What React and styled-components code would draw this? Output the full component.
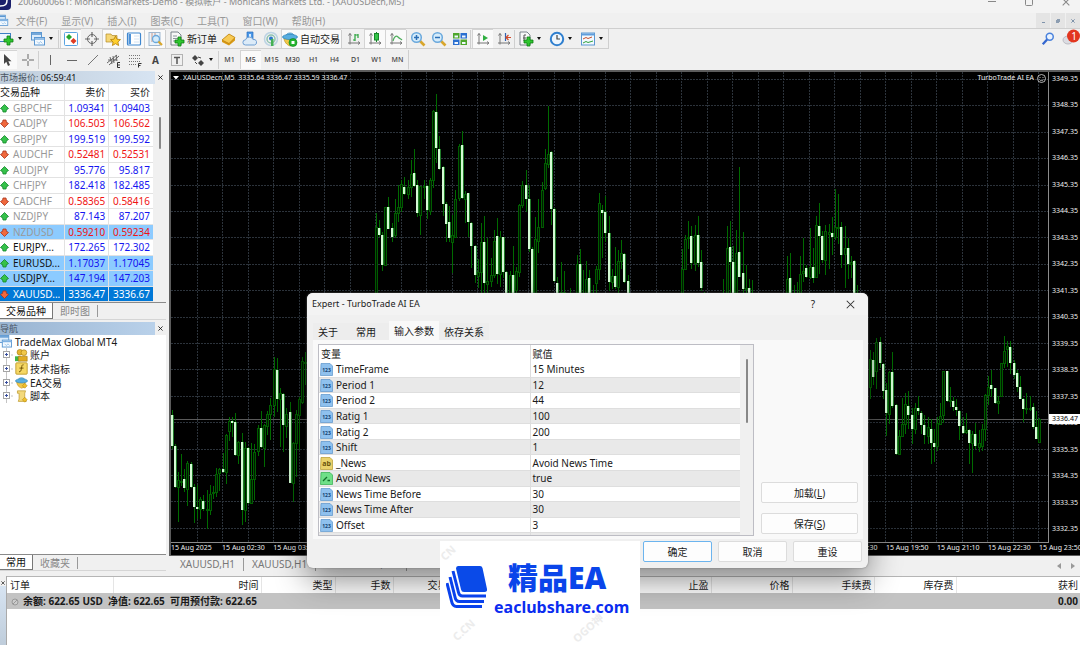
import styled, { createGlobalStyle, css } from 'styled-components'

const Global = createGlobalStyle`
  * { box-sizing: border-box; }
  body {
    margin: 0;
    overflow: hidden;
    background: #f0f0f0;
    color: #1a1a1a;
    font-family: 'Noto Sans', 'Noto Sans CJK SC', sans-serif;
    font-size: 10px;
    line-height: 14px;
  }
  button {
    font: inherit;
    color: inherit;
    padding: 0;
    border: 0;
    background: none;
    white-space: nowrap;
  }
  table { border-collapse: collapse; }
  th { font-weight: 400; }
`

const Desktop = styled.div`
  position: relative;
  display: flex;
  flex-direction: column;
  height: 100vh;
  min-height: 600px;
  overflow: hidden;
`

/* window chrome */

const TitleBar = styled.header`
  display: flex;
  align-items: center;
  flex: none;
  height: 22px;
  margin-top: -9px;
  background: #f3f3f3;
  color: #8c8c8c;
  font-size: 9px;
`

const Caption = styled.span`
  flex: 1;
  padding-left: 7px;
  white-space: nowrap;
`

const WindowButtons = styled.div`
  display: flex;
  gap: 21px;
  padding-right: 6px;
  color: #777;

  button {
    display: flex;
    width: 16px;
    justify-content: center;
  }
`

const MenuBar = styled.nav`
  display: flex;
  align-items: center;
  flex: none;
  height: 15px;
  gap: 14px;
  color: #999;

  > svg { margin-right: -7px; }
  button { height: 15px; }
`

const ChildButtons = styled.div`
  display: flex;
  margin-left: auto;
  gap: 1px;

  button {
    display: flex;
    align-items: center;
    justify-content: center;
    width: 14px;
    background: #e4e4e4;
  }
`

/* toolbars */

const ToolBar = styled.div`
  display: flex;
  align-items: center;
  flex: none;
  height: 21px;
  border-top: 1px solid ${p => (p.$edge ? '#cfcfcf' : 'transparent')};
`

const ToolGroup = styled.div`
  display: flex;
  align-items: center;
  height: 20px;
  margin-left: -4px;
  border-right: 1px solid #cfcfcf;
  border-bottom: 1px solid ${p => (p.$edge ? '#cfcfcf' : 'transparent')};
`

const Tool = styled.button`
  display: flex;
  align-items: center;
  justify-content: center;
  gap: 2px;
  height: 19px;
  ${p => (p.$wide ? 'padding: 0 1px;' : 'width: 21px;')}
  ${p => p.$on && css`
    background: #fafafa;
    box-shadow: inset 1px 1px 0 #d4d4d4;
  `}
`

const Letter = styled(Tool)`
  color: #444;
  font-weight: 700;
`

const Period = styled(Tool)`
  color: #444;
  font-size: 7px;
  font-weight: 500;
`

const Caret = styled.button`
  width: 8px;
  height: 19px;
  margin-right: 2px;

  &::after {
    content: '';
    display: block;
    width: 0;
    margin-left: 1px;
    border: 2px solid transparent;
    border-top: 3px solid #111;
    border-bottom: 0;
  }
`

const Divider = styled.i`
  width: 1px;
  height: 18px;
  margin-right: ${p => p.$space || 0}px;
  background: #cfcfcf;
`

const ToolRight = styled.div`
  display: flex;
  gap: 4px;
  margin-left: auto;
`

/* side panels */

const Workspace = styled.main`
  display: flex;
  flex: 1;
  min-height: 0;
`

const Side = styled.aside`
  display: flex;
  flex-direction: column;
  flex: none;
  width: 166px;
  padding-top: 1px;
`

const PanelHead = styled.div`
  display: flex;
  flex: none;
  height: 13px;
  font-size: 9px;
  line-height: 13px;

  h2 {
    flex: 1;
    margin: 0;
    font-size: 9px;
    font-weight: 400;
    color: #4a5563;
    background: ${p => (p.$active ? 'linear-gradient(90deg, #99b4d1, #b9d1ea)' : 'linear-gradient(90deg, #bfcddb, #d7e4f2)')};
  }
  b { font-weight: 400; color: #111; }
  button {
    display: flex;
    align-items: center;
    justify-content: center;
    width: 11px;
  }
`

const ListBox = styled.div`
  display: flex;
  flex: none;
  border-bottom: 1px solid #8a8a8a;
`

const Quotes = styled.table`
  flex: 1;
  height: 218px;
  table-layout: fixed;
  background: #fff;

  th, td {
    padding: 0 3px 0 0;
    line-height: 14px;
    text-align: right;
    white-space: nowrap;
    border-bottom: 1px solid #e2e2e2;
    border-right: 1px solid #e2e2e2;
  }
  th { height: 16px; }
  th:first-child { width: 64px; }
  td:last-child, th:last-child { border-right: 0; }
  th:first-child, td:first-child { text-align: left; }
`

const Quote = styled.tr`
  color: ${p => (p.$dir === 'up' ? '#1414f0' : '#f01414')};
  ${p => p.$mark && 'background: #8ccbff;'}
  ${p => p.$selected && 'background: #0078d7; color: #fff;'}

  td:first-child {
    color: ${p => (p.$selected ? '#fff' : p.$dim ? '#999' : '#111')};
  }
  td svg {
    margin-right: 4px;
    vertical-align: -1px;
  }
`

const Gutter = styled.div`
  display: flex;
  justify-content: center;
  width: ${p => p.$width}px;
  padding-top: ${p => p.$top}px;
  background: #f0f0f0;
`

const Thumb = styled.i`
  width: 2px;
  height: ${p => p.$length}px;
  border-radius: 1px;
  background: #888;
`

const BottomTabs = styled.div`
  display: flex;
  flex: none;
  height: 16px;
  ${p => p.$line && 'border-top: 1px solid #8a8a8a;'}
`

const BottomTab = styled.button`
  padding: 0 7px;
  color: #888;
  ${p => p.$on && css`
    padding: 0 6px;
    color: #111;
    background: #fff;
    border-right: 1px solid #777;
    border-bottom: 1px solid #777;
  `}
`

const Tick = styled.i`
  width: 1px;
  height: 12px;
  margin-top: 2px;
  background: #999;
`

const NavGap = styled.div`
  flex: none;
  height: 3px;
  border-top: 1px solid #d5d5d5;
`

const TreeArea = styled.div`
  flex: 1;
  background: #fff;
`

const Tree = styled.ul`
  display: grid;
  grid-template-rows: repeat(5, minmax(0, 1fr));
  height: 68px;
  margin: 0;
  padding: 0;
  list-style: none;
`

const Node = styled.li`
  display: flex;
  align-items: center;
  gap: ${p => (p.$root ? 3 : 2)}px;
  padding-left: ${p => (p.$root ? 0 : 2)}px;
`

/* chart */

const ChartPane = styled.section`
  display: flex;
  flex-direction: column;
  flex: 1;
  min-width: 0;
  margin-left: 3px;
`

const ChartFrame = styled.div`
  position: relative;
  display: flex;
  flex-direction: column;
  flex: 1;
  min-height: 0;
  border: solid #5c5c5c;
  border-width: 2px 0 1px 2px;
  background: #000;
  color: #eee;
  font-size: 7px;
  line-height: 10px;
  overflow: hidden;
`

const PlotRow = styled.div`
  display: flex;
  flex: 1;
  min-height: 0;
`

const Plot = styled.div`
  flex: 1;
  min-width: 0;
  border-right: 1px solid #8c8c8c;
  border-bottom: 1px solid #8c8c8c;
  overflow: hidden;

  svg {
    display: block;
    width: 100%;
    height: 100%;
  }
`

const PriceAxis = styled.div`
  position: relative;
  display: flex;
  flex-direction: column;
  justify-content: space-between;
  width: 31px;
  padding: 2px 0 9px 3px;
`

const PriceTag = styled.div`
  position: absolute;
  top: 342px;
  left: 0;
  right: 0;
  padding-left: 3px;
  background: #fff;
  color: #000;
`

const TimeAxis = styled.div`
  display: flex;
  flex: none;
  height: 12px;
  padding-right: 41px;
  white-space: nowrap;

  span { flex: 1 1 0; min-width: 0; }
  span:last-child { flex: 0 0 0; }
`

const ChartTitle = styled.div`
  position: absolute;
  top: 1px;
  left: 2px;
  display: flex;
  align-items: center;
  gap: 4px;
  white-space: pre;
`

const ExpertLabel = styled(ChartTitle)`
  left: auto;
  right: 34px;
  gap: 3px;
`

const ChartTabs = styled.div`
  display: flex;
  align-items: center;
  flex: none;
  height: 17px;
  padding-left: 3px;
  color: #777;

  button {
    height: 13px;
    padding: 0 8px;
    border-right: 1px solid #999;
    line-height: 13px;
  }
  div { margin-left: auto; }
  div button { border: 0; padding: 0 5px; }
`

/* terminal */

const Terminal = styled.section`
  display: flex;
  flex: none;
  height: 72px;
  padding-top: 3px;
`

const Rail = styled.div`
  display: flex;
  flex-direction: column;
  width: 7px;
  border-right: 1px solid #aaa;

  button { height: 10px; line-height: 10px; }
  i {
    flex: 1;
    background: linear-gradient(#d7e4f2, #bfcddb);
  }
`

const TradesArea = styled.div`
  flex: 1;
  border-top: 1px solid #b5b5b5;
  background: #fff;
`

const Trades = styled.table`
  width: 100%;
  table-layout: fixed;

  th, td {
    height: 16px;
    padding: 0 2px;
    text-align: right;
    white-space: nowrap;
    line-height: 14px;
  }
  th + th { border-left: 1px solid #e5e5e5; }
  th:first-child, td:first-child { text-align: left; padding-left: 3px; }
  td {
    background: #c3c3c3;
    font-weight: 700;
  }
  td svg { margin: 0 4px 0 1px; vertical-align: -1px; }
`

/* expert dialog */

const Dialog = styled.div`
  position: absolute;
  top: 293px;
  left: 307px;
  width: 561px;
  border-radius: 6px;
  background: #f0f0f0;
  box-shadow: 0 0 2px #777, 0 12px 32px rgba(0, 0, 0, 0.45);
`

const DialogTitle = styled.div`
  display: flex;
  align-items: center;
  height: 22px;
  padding: 0 13px 0 5px;
  border-radius: 6px 6px 0 0;
  background: #f3f3f3;

  h1 {
    flex: 1;
    margin: 0;
    font-size: 9px;
    font-weight: 400;
  }
  button {
    display: flex;
    justify-content: center;
    width: 10px;
    margin-left: 27px;
  }
`

const DialogTabs = styled.div`
  display: flex;
  align-items: flex-end;
  height: 25px;
  padding-left: 6px;
`

const DialogTab = styled.button`
  min-width: 38px;
  height: ${p => (p.$on ? 19 : 17)}px;
  padding: 0 5px;
  text-align: left;
  background: ${p => (p.$on ? '#f9f9f9' : '#ededed')};
`

const DialogPage = styled.div`
  display: flex;
  gap: 7px;
  height: 199px;
  margin: 0 5px 0 6px;
  padding: 4px 5px 3px;
  background: #f9f9f9;
`

const ParamBox = styled.div`
  display: flex;
  flex: 1;
  align-items: flex-start;
  border: 1px solid #bdbdc4;
  overflow: hidden;
  background: #fff;

  ${Gutter} { height: 100%; }
`

const Params = styled.table`
  flex: 1;
  height: 204px;
  table-layout: fixed;

  th, td {
    padding: 0 2px;
    line-height: 14px;
    text-align: left;
    white-space: nowrap;
  }
  th { height: 17px; padding-top: 1px; }
  th:first-child { width: 211px; }
  th + th, td + td { border-left: 1px solid #ddd; }
  td { border-bottom: 1px solid #dedede; }
  tbody tr:nth-child(even) { background: #e9e9e9; }
  td:first-child { padding-left: 1px; }
  td svg {
    display: inline-block;
    margin-right: 3px;
    vertical-align: -3px;
  }
`

const PageActions = styled.div`
  display: flex;
  flex-direction: column;
  justify-content: flex-end;
  gap: 10px;
  width: 97px;
  padding-bottom: 2px;
`

const PushButton = styled.button`
  height: 21px;
  border: 1px solid ${p => (p.$primary ? '#6cb4ee' : '#dcdcdc')};
  border-radius: 2px;
  background: #fdfdfd;
`

const DialogFoot = styled.div`
  display: flex;
  justify-content: flex-end;
  gap: 6px;
  height: 29px;
  padding: 2px 6px 6px;

  ${PushButton} { width: 69px; }
`

/* site badge */

const Badge = styled.div`
  position: absolute;
  left: 440px;
  bottom: 0;
  isolation: isolate;
  display: flex;
  gap: 6px;
  width: 200px;
  height: 104px;
  padding: 20px 0 0 6px;
  background: #fff;
  color: #0a45ea;
  font-weight: 700;
  white-space: nowrap;
  overflow: hidden;

  > svg { flex: none; margin-top: 4px; }
  strong {
    display: block;
    padding-left: 14px;
    font-size: 30px;
    line-height: 34px;
  }
  a {
    display: block;
    font-size: 16px;
    line-height: 24px;
    color: #0a2cf0;
    text-decoration: none;
  }
`

const Ghost = styled.span`
  position: absolute;
  z-index: -1;
  left: ${p => p.$x}px;
  top: ${p => p.$y}px;
  color: #ececec;
  font-size: 11px;
  transform: rotate(-42deg);
`

/* bars: [high, low, body top, body bottom, falling], three units per pixel */

const runs = [
  { start: -64, base: 690, bars: [
    [330, 447, 345, 437, 1], [432, 565, 437, 562, 1], [515, 665, 541, 560, 0], [462, 558, 543, 545, 0],
    [508, 575, 537, 565, 1], [482, 618, 488, 567, 0], [485, 563, 492, 560, 1], [553, 670, 562, 620, 1],
    [555, 657, 620, 628, 1], [590, 657, 598, 628, 0], [585, 632, 602, 628, 1], [570, 687, 628, 630, 0],
    [555, 645, 581, 630, 0], [557, 597, 577, 580, 0], [505, 592, 521, 577, 0], [505, 573, 508, 520, 0],
    [460, 520, 508, 516, 1], [402, 553, 405, 515, 0], [350, 422, 362, 392, 0], [352, 412, 362, 368, 1],
    [340, 468, 366, 465, 1], [423, 492, 425, 465, 0], [400, 675, 427, 630, 1], [425, 665, 443, 630, 0],
    [440, 613, 443, 610, 1], [428, 612, 538, 608, 0], [432, 600, 455, 537, 0], [375, 467, 383, 453, 0],
    [333, 445, 383, 441, 1], [372, 500, 376, 443, 0], [333, 405, 343, 377, 0], [295, 420, 315, 343, 0],
    [170, 352, 207, 315, 0], [175, 335, 210, 297, 1], [263, 440, 278, 297, 0], [280, 455, 282, 376, 1],
    [325, 415, 342, 377, 0], [305, 550, 337, 548, 1], [425, 607, 428, 548, 0], [330, 530, 343, 428, 0],
    [292, 450, 298, 345, 0], [170, 312, 182, 305, 0], [155, 255, 187, 189, 0]
  ] },
  { start: 0, base: 0, bars: [
    [430, 690, 472, 690, 0], [450, 500, 474, 495, 1], [487, 602, 496, 584, 1], [410, 586, 410, 586, 0],
    [380, 478, 411, 476, 1], [458, 515, 475, 502, 1], [388, 503, 428, 494, 0], [346, 455, 411, 428, 0],
    [330, 425, 343, 410, 0], [321, 375, 351, 373, 1], [330, 387, 351, 371, 0], [270, 380, 312, 351, 0],
    [236, 350, 310, 347, 1], [330, 442, 344, 430, 1], [347, 495, 349, 436, 0], [330, 388, 349, 350, 0],
    [345, 447, 349, 420, 1], [325, 435, 331, 423, 0], [120, 355, 122, 330, 0], [72, 278, 125, 234, 1],
    [197, 300, 236, 297, 1], [288, 437, 291, 402, 1], [395, 515, 401, 461, 1], [407, 515, 455, 504, 1],
    [435, 610, 495, 515, 0], [360, 503, 387, 502, 0], [223, 393, 228, 385, 0], [183, 388, 226, 384, 1],
    [362, 460, 372, 386, 0], [368, 500, 370, 455, 1], [457, 595, 459, 527, 1], [525, 640, 527, 614, 1],
    [566, 655, 607, 617, 0], [460, 690, 516, 607, 0], [437, 690, 515, 640, 1], [505, 690, 632, 643, 0],
    [565, 650, 615, 632, 0], [480, 625, 512, 615, 0], [445, 643, 497, 612, 1], [483, 650, 501, 613, 0],
    [500, 625, 502, 606, 1], [603, 690, 606, 690, 1], [603, 690, 615, 690, 0], [528, 690, 615, 690, 1],
    [592, 690, 603, 660, 0], [403, 620, 405, 607, 0], [333, 415, 345, 405, 0], [300, 425, 345, 387, 1],
    [345, 545, 386, 538, 1], [530, 690, 538, 690, 1], [440, 690, 508, 690, 0], [387, 550, 472, 513, 0],
    [335, 475, 361, 470, 0], [238, 360, 280, 355, 0], [107, 293, 253, 283, 0], [243, 465, 246, 418, 1],
    [415, 635, 418, 633, 1], [620, 690, 640, 690, 1], [575, 690, 665, 690, 0], [603, 690, 665, 690, 0]
  ] },
  { start: 61, base: 0, bars: [
    [655, 690, 680, 690, 0], [680, 700, 685, 690, 0], [555, 690, 583, 690, 0], [537, 690, 583, 690, 1],
    [600, 690, 670, 690, 0], [573, 690, 628, 690, 0], [600, 690, 625, 690, 1], [645, 690, 670, 690, 0],
    [587, 690, 597, 640, 0], [370, 630, 400, 598, 0], [405, 563, 420, 430, 1], [378, 515, 427, 489, 1],
    [438, 662, 490, 636, 1], [597, 658, 618, 637, 0], [530, 658, 618, 650, 1], [540, 690, 573, 650, 0],
    [510, 598, 550, 573, 0], [550, 640, 553, 636, 1], [615, 690, 634, 690, 1]
  ] },
  { start: 96, base: 0, bars: [
    [537, 690, 597, 690, 0], [494, 600, 507, 598, 0], [452, 537, 500, 505, 0], [467, 597, 498, 578, 1],
    [465, 603, 495, 578, 0], [437, 590, 495, 580, 1], [540, 662, 577, 653, 1], [665, 690, 670, 690, 0]
  ] },
  { start: 109, base: 0, bars: [
    [628, 690, 680, 690, 0], [467, 690, 535, 690, 0], [452, 690, 532, 577, 1], [528, 690, 577, 690, 1],
    [480, 690, 548, 690, 0], [290, 622, 547, 620, 1], [487, 690, 608, 657, 1], [586, 690, 655, 658, 0],
    [628, 690, 653, 690, 1], [630, 690, 670, 690, 0]
  ] },
  { start: 129, base: 0, bars: [
    [558, 690, 627, 690, 0], [548, 690, 625, 690, 1], [645, 690, 680, 690, 0], [637, 690, 680, 690, 0],
    [558, 690, 613, 690, 0], [503, 635, 603, 608, 0], [585, 625, 595, 620, 1], [475, 628, 592, 620, 0],
    [533, 640, 590, 624, 1], [437, 623, 465, 620, 0], [400, 612, 467, 498, 1], [483, 580, 498, 570, 1],
    [465, 615, 482, 570, 0], [462, 597, 487, 492, 0], [440, 555, 488, 500, 1], [357, 510, 472, 500, 0],
    [372, 522, 470, 473, 0], [457, 595, 470, 555, 1], [467, 655, 535, 553, 0], [503, 628, 535, 583, 1],
    [558, 623, 577, 581, 0], [570, 690, 573, 690, 1], [645, 690, 680, 690, 0]
  ] },
  { start: 155, base: 690, bars: [
    [150, 298, 178, 262, 0], [155, 255, 181, 232, 1], [115, 267, 127, 212, 0], [112, 205, 127, 190, 1],
    [190, 298, 191, 272, 1], [250, 408, 270, 340, 1], [212, 372, 217, 342, 0], [155, 325, 217, 317, 1],
    [312, 465, 315, 462, 1], [390, 465, 407, 462, 0], [295, 410, 372, 408, 0], [278, 402, 313, 373, 0],
    [273, 388, 318, 345, 1], [323, 432, 346, 387, 1], [310, 403, 325, 388, 0], [287, 345, 325, 333, 1],
    [332, 402, 339, 375, 1], [345, 432, 375, 405, 1], [352, 432, 382, 407, 0], [357, 492, 386, 429, 1],
    [388, 485, 428, 440, 1], [352, 452, 370, 437, 0], [310, 375, 347, 371, 0], [212, 370, 213, 345, 0],
    [212, 307, 213, 303, 1], [262, 322, 299, 301, 0], [290, 333, 302, 320, 1], [298, 347, 320, 331, 1],
    [330, 420, 332, 377, 1], [352, 403, 378, 398, 1], [340, 402, 390, 397, 0], [388, 492, 390, 430, 1],
    [392, 518, 402, 430, 0], [368, 447, 402, 437, 1], [390, 455, 430, 440, 0], [372, 452, 387, 437, 0],
    [282, 422, 286, 387, 0], [228, 315, 262, 286, 0], [210, 290, 256, 267, 1], [263, 312, 264, 310, 1],
    [288, 342, 302, 308, 0], [188, 290, 190, 288, 0], [107, 203, 153, 190, 0], [122, 202, 138, 146, 0],
    [122, 223, 140, 190, 1], [180, 237, 190, 225, 1], [210, 275, 219, 262, 1], [228, 298, 262, 296, 1],
    [293, 365, 296, 326, 1], [278, 343, 324, 327, 0], [287, 333, 323, 325, 0], [308, 388, 322, 380, 1],
    [333, 418, 382, 416, 1], [355, 430, 358, 425, 0]
  ] }
]

const scale = v => Math.round(v / 3)

const candles = runs.flatMap(({ start, base, bars }) =>
  bars.map(([high, low, top, bottom, falling], i) => ({
    x: scale(614 + 9.57 * (start + i)),
    high: scale(high + base - 6),
    low: scale(low + base - 6),
    top: scale(top + base - 6),
    bottom: scale(bottom + base - 6),
    falling
  }))
)

const prices = Array.from({ length: 18 }, (_, i) => (3349.35 - i).toFixed(2))

const times = Array.from({ length: 18 }, (_, i) => {
  if (i === 0) return '15 Aug 2025'
  const m = 70 + i * 80
  return `15 Aug ${String(Math.floor(m / 60)).padStart(2, '0')}:${String(m % 60).padStart(2, '0')}`
})

const gridColumns = Array.from({ length: 34 }, (_, i) => Math.round(25.5 * (i + 1)))

const quotes = [
  ['GBPCHF', '1.09341', '1.09403', 'up', 'dim'],
  ['CADJPY', '106.503', '106.562', 'down', 'dim'],
  ['GBPJPY', '199.519', '199.592', 'up', 'dim'],
  ['AUDCHF', '0.52481', '0.52531', 'down', 'dim'],
  ['AUDJPY', '95.776', '95.817', 'up', 'dim'],
  ['CHFJPY', '182.418', '182.485', 'up', 'dim'],
  ['CADCHF', '0.58365', '0.58416', 'down', 'dim'],
  ['NZDJPY', '87.143', '87.207', 'up', 'dim'],
  ['NZDUSD', '0.59210', '0.59234', 'down', 'dim mark'],
  ['EURJPY...', '172.265', '172.302', 'up', ''],
  ['EURUSD...', '1.17037', '1.17045', 'up', 'mark'],
  ['USDJPY...', '147.194', '147.203', 'up', 'mark'],
  ['XAUUSD...', '3336.47', '3336.67', 'down', 'selected']
]

const params = [
  ['num', 'TimeFrame', '15 Minutes'],
  ['num', 'Period 1', '12'],
  ['num', 'Period 2', '44'],
  ['num', 'Ratig 1', '100'],
  ['num', 'Ratig 2', '200'],
  ['num', 'Shift', '1'],
  ['str', '_News', 'Avoid News Time'],
  ['bool', 'Avoid News', 'true'],
  ['num', 'News Time Before', '30'],
  ['num', 'News Time After', '30'],
  ['num', 'Offset', '3'],
  ['bool', '', '']
]

const columns = [
  ['订单', 106], ['时间', 148], ['类型', 74], ['手数', 58], ['交易品种', 77], ['价格', 82],
  ['止损', 82], ['止盈', 77], ['价格', 81], ['手续费', 82], ['库存费', 82], ['获利']
]

/* icons */

const Icon = ({ size = 16, children }) => (
  <svg width={size} height={size} viewBox="0 0 16 16" fill="none" aria-hidden="true">{children}</svg>
)

const Plus = ({ x = 6, y = 6 }) => (
  <path d={`M${x + 3} ${y}h3v3h3v3h-3v3h-3v-3h-3v-3h3z`} fill="#2fc52f" stroke="#0d7d12" strokeWidth=".8" />
)

const Cross = ({ size = 6, color = '#111', width = 1 }) => (
  <svg width={size} height={size} viewBox="0 0 6 6" aria-hidden="true">
    <path d="M.5 .5l5 5M5.5 .5l-5 5" stroke={color} strokeWidth={width} />
  </svg>
)

const Windows = () => (
  <>
    <rect x="1.5" y="1.5" width="10" height="7.5" fill="#dcecfb" stroke="#5b97d1" />
    <path d="M1.5 3h10" stroke="#5b97d1" strokeWidth="1.6" />
    <rect x="4.5" y="6.5" width="10" height="7.5" fill="#f4faff" stroke="#5b97d1" />
    <path d="M4.5 8h10" stroke="#7fb2e3" strokeWidth="1.6" />
    <path d="M7 10.500l2 2 1.500-2 2 2" stroke="#8fbbe6" strokeWidth=".8" />
  </>
)

const Sheet = ({ x = 2 }) => (
  <path d={`M${x} 1h7l3 3v10h-10z`} fill="#f7f7f7" stroke="#6d7780" strokeWidth=".9" />
)

const Axes = () => (
  <path d="M4 2.5v11M2 12h12M2.5 4.5L4 2.5l1.5 2M12 10.5l2 1.5-2 1.500" stroke="#777" />
)

const Lens = ({ minus }) => (
  <Icon>
    <path d="M10 10l4.500 4.500" stroke="#d8a62c" strokeWidth="2.600" />
    <circle cx="6.500" cy="6.500" r="4.800" fill="#d5ecfb" stroke="#6aa8dc" strokeWidth="1.500" />
    <path d={minus ? 'M4 6.500h5' : 'M4 6.500h5M6.500 4v5'} stroke="#2b6eb5" strokeWidth="1.500" />
  </Icon>
)

const Hat = () => (
  <>
    <path d="M2 7c0 4 3 7 6 8l3-1 2-6z" fill="#f1c84a" stroke="#b98d1c" strokeWidth=".6" />
    <path d="M4 5c0-4 8-4 8 0z" fill="#7cc3ea" stroke="#2b83b9" strokeWidth=".7" />
    <ellipse cx="8" cy="6" rx="7.500" ry="2.600" fill="#58aee0" stroke="#2b83b9" strokeWidth=".7" />
  </>
)

const icons = {
  newChart: <Icon><rect x="0.500" y="2.500" width="11" height="8" fill="#eef6ff" stroke="#3c7fc4" /><Plus x={5} y={5} /></Icon>,
  profiles: <Icon><Windows /></Icon>,
  market: <Icon><rect x="1.500" y="1.500" width="13" height="13" rx="1" fill="#fff" stroke="#5aa4e2" /><path d="M6 3l3 3-3 3-3-3z" fill="#27a52f" /><path d="M10.500 7l3 3-3 3-3-3z" fill="#e03c22" /></Icon>,
  cross: <Icon><circle cx="8" cy="8" r="4.500" stroke="#666" /><path d="M8 1v5M8 10v5M1 8h5M10 8h5" stroke="#666" strokeWidth="1.200" /></Icon>,
  folder: <Icon><path d="M1 3h5l1 1.500h5V11H1z" fill="#f6d776" stroke="#b18a25" strokeWidth=".7" /><path d="M10.500 5l1.500 3.200 3.500.4-2.600 2.400.7 3.500-3.100-1.800-3.100 1.800.7-3.500L5.500 8.600 9 8.200z" fill="#ffcf2e" stroke="#b27d07" strokeWidth=".8" /></Icon>,
  terminal: <Icon><rect x="1.500" y="2" width="13" height="12" rx="1" fill="#fff" stroke="#3f87cf" strokeWidth="1.200" /><path d="M2.500 3v10h2.500V3z" fill="#4f93d8" /><path d="M8 5h5M8 8h5M8 11h5" stroke="#d4e3f2" /></Icon>,
  tester: <Icon><rect x="2" y="1.500" width="11" height="13" fill="#eaf3fb" stroke="#9fb7cf" /><path d="M5 2v9M8 2v7" stroke="#c98" /><circle cx="9" cy="8" r="3.500" fill="#d5ecfb" stroke="#6aa8dc" strokeWidth="1.300" /><path d="M11.500 10.500L15 14" stroke="#d8a62c" strokeWidth="2.200" /></Icon>,
  order: <Icon><Sheet x={2} /><path d="M4 5h4M4 7.500h6M4 10h3" stroke="#8c969e" /><Plus x={6} y={6} /></Icon>,
  gold: <Icon><path d="M1 9l7-6 6 3.500v3L8 14.500 1 11z" fill="#d99a14" /><path d="M1 9l7-6 6 3.500-6 6z" fill="#f7ca55" stroke="#b77d0b" strokeWidth=".7" /></Icon>,
  cloud: <Icon><path d="M5 1h6v8H5z" fill="#4a97e8" stroke="#2a6dbb" strokeWidth=".7" /><path d="M7 3h2v4H7z" fill="#d7ecff" /><path d="M3.500 14a2.600 2.600 0 010-5.200A4 4 0 0111 8.500a2.800 2.800 0 011.500 5.500z" fill="#dcebf8" stroke="#6f9fd3" /></Icon>,
  signal: <Icon><circle cx="8" cy="8" r="6.500" stroke="#bcd3e3" strokeWidth="1.500" /><circle cx="8" cy="8" r="4" stroke="#8fc2b0" strokeWidth="1.500" /><circle cx="8" cy="7.500" r="2" fill="#2b78c8" /><path d="M8 8h2.500v7H8z" fill="#45b154" /></Icon>,
  auto: <Icon><Hat /><circle cx="11" cy="11.500" r="4" fill="#25b52f" stroke="#0c8318" strokeWidth=".6" /><path d="M9.500 10h3v3h-3z" fill="#fff" /></Icon>,
  bars: <Icon><Axes /><path d="M9 3v7M9 9H7M9 4h3M12 3v4" stroke="#27a23a" strokeWidth="1.200" /></Icon>,
  candle: <Icon><Axes /><path d="M9.500 1v10" stroke="#16882a" /><rect x="7.500" y="2.500" width="4" height="6.500" fill="#35c549" stroke="#16882a" /></Icon>,
  line: <Icon><Axes /><path d="M5 10c1-4 3-6 5-4s3 2 4 3" stroke="#4fae5d" strokeWidth="1.200" /></Icon>,
  tile: <Icon><path d="M1 2h6.500v5.500H1z" fill="#4ea72c" /><path d="M8.500 2H15v5.500H8.500z" fill="#2b6fd0" /><path d="M1 8.500h6.500V14H1z" fill="#2b6fd0" /><path d="M8.500 8.500H15V14H8.500z" fill="#4ea72c" /><path d="M2.500 4.500H6v2H2.500zM10 4.500h3.500v2H10zM2.500 11H6v2H2.500zM10 11h3.500v2H10z" fill="#f2f8ff" /></Icon>,
  scroll: <Icon><Axes /><path d="M8 4l5 3-5 3z" fill="#2fae41" /></Icon>,
  shift: <Icon><Axes /><path d="M9.500 2v8" stroke="#2d62b3" strokeWidth="1.200" /><path d="M15 6.500h-5M12.500 4l-2.500 2.500L12.500 9" stroke="#d0492a" strokeWidth="1.200" /></Icon>,
  indicators: <Icon><Sheet x={2} /><path d="M6 4v6M6 4h2M5 7h3" stroke="#555" /><Plus x={6} y={6} /></Icon>,
  clock: <Icon><circle cx="8" cy="8" r="6.200" fill="#eef6fd" stroke="#2f7fcf" strokeWidth="2" /><path d="M8 4v4h3" stroke="#444" strokeWidth="1.200" /></Icon>,
  template: <Icon><rect x="1.500" y="2" width="13" height="12" fill="#f3f9ff" stroke="#5b97d1" /><path d="M1.500 3.500h13" stroke="#5f9ddb" strokeWidth="2" /><path d="M3 8l3-1.500 2 1 4-1.500" stroke="#c8502a" /><path d="M3 12l3-1.500 2 1 5-1.500" stroke="#2fa23d" /></Icon>,
  pointer: <Icon><path d="M5 2v10l2.300-2.200L9 14l2-1-1.700-3.800H12.500z" fill="#444" /></Icon>,
  hair: <Icon><path d="M8 2v5M8 9v5M2 8h5M9 8h5" stroke="#666" /></Icon>,
  vline: <Icon><path d="M7.500 3v10" stroke="#666" /></Icon>,
  hline: <Icon><path d="M3 8.500h10" stroke="#666" /></Icon>,
  trend: <Icon><path d="M3 13L13 3" stroke="#777" /></Icon>,
  channel: <Icon><path d="M1 11l10-8M3 13L13 4M4 5l2 7M7 4l1 7M10 3l1 6M2 8h9" stroke="#666" /><path d="M14 10.500h-2.500v5H14M11.500 13H14" stroke="#333" /></Icon>,
  fibo: <Icon><path d="M2 3.500h12M2 6.500h12M2 9.500h12M2 12.500h8" stroke="#777" strokeDasharray="1 1" /><path d="M11.500 15.500v-4h3M11.500 13.500h2" stroke="#333" /></Icon>,
  label: <Icon><rect x="2.500" y="2.500" width="11" height="11" stroke="#777" strokeDasharray="1 1" /><path d="M5 5.500h6M8 5.500V12" stroke="#555" strokeWidth="1.500" /></Icon>,
  arrows: <Icon><path d="M5 3l3 3-3 3-3-3z" fill="#444" /><path d="M11 8l3 3-3 3-3-3z" fill="#444" /><path d="M8 5l3 1M5 10l2 2" stroke="#444" /></Icon>,
  search: <Icon size={14}><circle cx="10" cy="5.500" r="4" fill="#eaf3ff" stroke="#4a82dc" strokeWidth="1.700" /><path d="M7 8.500L2 14" stroke="#3467cf" strokeWidth="2.600" /></Icon>
}

const arrowPaths = {
  up: 'M4.5 .5l4 4-1.500 1H6.500L6 8H3l-.5-2.500H2l-1.500-1z',
  down: 'M4.5 8.500l-4-4 1.500-1h.5L3 1h3l.5 2.500H7l1.500 1z'
}

const Arrow = ({ dir }) => (
  <svg width="9" height="9" viewBox="0 0 9 9" aria-hidden="true">
    <path
      d={arrowPaths[dir]}
      fill={dir === 'up' ? '#35c24a' : '#f0683c'}
      stroke={dir === 'up' ? '#12852a' : '#a8321a'}
      strokeWidth=".8"
    />
  </svg>
)

const kinds = {
  num: ['#8fc1ee', '#5a94cc', '123', '#143f70'],
  str: ['#e9d26c', '#b59a2c', 'ab', '#6b560c'],
  bool: ['#6fe088', '#2fae4b']
}

const ParamIcon = ({ kind }) => {
  const [fill, stroke, text, ink] = kinds[kind]
  return (
    <svg width="13" height="13" viewBox="0 0 13 13" aria-hidden="true">
      <path d="M1 .5h9l2.500 2.500v9.500H.5z" fill={fill} stroke={stroke} strokeWidth=".7" />
      {text ? (
        <text x="6.500" y="9" textAnchor="middle" fontSize={text === 'ab' ? 7 : 5} fontWeight="700" fill={ink}>{text}</text>
      ) : (
        <path d="M3 9l4-4M7.500 8.500H10" stroke="#12702a" strokeWidth="1.300" />
      )}
    </svg>
  )
}

const Expander = () => (
  <svg width="11" height="14" viewBox="0 0 11 14" fill="none" aria-hidden="true">
    <path d="M4.500 0v14M9 7h2" stroke="#c4c4c4" />
    <rect x="1.500" y="3.500" width="6" height="6" fill="#fff" stroke="#a5a5a5" />
    <path d="M3 6.500h3M4.500 5v3" stroke="#3a4f9e" />
  </svg>
)

const treeIcons = {
  accounts: <Icon size={13}><path d="M0 9h7v6H0z" fill="#3eb54a" /><circle cx="6" cy="4" r="3.500" fill="#e6b52e" stroke="#a0770c" strokeWidth=".7" /><circle cx="11" cy="4.500" r="3.500" fill="#f1c84a" stroke="#a0770c" strokeWidth=".7" /><path d="M4 15V9h11v6z" fill="#e0ab22" stroke="#a0770c" strokeWidth=".7" /></Icon>,
  indicators: <Icon size={13}><rect x="1" y="1" width="14" height="14" rx="1" fill="#f5d765" stroke="#b8921f" /><path d="M10.500 3.500c-2-.5-2 1-2.500 4s-1 5-3 4.500M5.500 7.500h5" stroke="#705408" strokeWidth="1.200" /></Icon>,
  experts: <Icon size={13}><Hat /><path d="M12 9l3 3-3 3-3-3z" fill="#f0c12b" stroke="#a87b0b" strokeWidth=".6" /></Icon>,
  scripts: <Icon size={13}><path d="M3 1h10l-1 3v7l2 3H4l1-3V4H3z" fill="#f3d97c" stroke="#b8921f" strokeWidth=".8" /><path d="M12 9l3 3-3 3-3-3z" fill="#f0c12b" stroke="#a87b0b" strokeWidth=".6" /></Icon>
}

function Tools({ names, active = [] }) {
  return names.map(name => (
    <Tool key={name} aria-label={name} $on={active.includes(name)}>{icons[name]}</Tool>
  ))
}

function TopBars() {
  return (
    <>
      <TitleBar>
        <svg width="11" height="18" viewBox="0 0 11 18" aria-hidden="true">
          <path d="M0 0h11v13q0 4-4 4H0z" fill="#1b1f6b" />
          <path d="M0 13c6 0 7-2 7-6" stroke="#fff" strokeWidth="1.500" fill="none" />
        </svg>
        <Caption>2006000661: MonicansMarkets-Demo - 模拟帐户 - Monicans Markets Ltd. - [XAUUSDecn,M5]</Caption>
        <WindowButtons>
          <button aria-label="minimize"><svg width="8" height="8"><path d="M0 3.500h8" stroke="#888" /></svg></button>
          <button aria-label="maximize"><svg width="8" height="8"><rect x=".5" y=".5" width="7" height="7" rx="1" fill="none" stroke="#888" /></svg></button>
          <button aria-label="close"><Cross size={8} color="#888" width={0.8} /></button>
        </WindowButtons>
      </TitleBar>
      <MenuBar>
        <svg width="9" height="13" viewBox="5 1 11 14" fill="none" aria-hidden="true"><Windows /></svg>
        {['文件(F)', '显示(V)', '插入(I)', '图表(C)', '工具(T)', '窗口(W)', '帮助(H)'].map(m => <button key={m}>{m}</button>)}
        <ChildButtons>
          <button aria-label="minimize chart"><svg width="3" height="6"><path d="M0 4.500h3" stroke="#7f93ab" /></svg></button>
          <button aria-label="restore chart"><svg width="4" height="4"><path d="M1 0h3v3H3v1H0V1h1z" fill="#8c9db1" /></svg></button>
          <button aria-label="close chart"><Cross size={4} color="#7f93ab" width={1.5} /></button>
        </ChildButtons>
      </MenuBar>
      <ToolBar $edge>
        <ToolGroup $edge>
          <Tools names={['newChart']} /><Caret aria-label="new chart list" />
          <Tools names={['profiles']} /><Caret aria-label="profile list" />
          <Divider $space={1} />
          <Tools names={['market', 'cross', 'folder', 'terminal', 'tester']} active={['market', 'folder', 'terminal', 'tester']} />
          <Divider $space={2} />
          <Tool $wide>{icons.order}新订单</Tool>
          <Tools names={['gold', 'cloud', 'signal']} />
          <Tool $wide $on>{icons.auto}自动交易</Tool>
          <Divider $space={1} />
          <Tools names={['bars', 'candle', 'line']} active={['candle', 'line']} />
          <Divider />
          <Tool aria-label="zoom in"><Lens /></Tool>
          <Tool aria-label="zoom out"><Lens minus /></Tool>
          <Tools names={['tile']} />
          <Divider $space={1} />
          <Tools names={['scroll', 'shift']} active={['scroll']} />
          <Divider />
          <Tools names={['indicators']} /><Caret aria-label="indicator list" />
          <Tools names={['clock']} /><Caret aria-label="period list" />
          <Tools names={['template']} /><Caret aria-label="template list" />
        </ToolGroup>
        <ToolRight>
          <Tools names={['search']} />
          <button aria-label="messages">
            <svg width="18" height="17" viewBox="0 0 18 17" aria-hidden="true">
              <ellipse cx="6" cy="11" rx="5" ry="4" fill="#dcdce2" stroke="#a9a9b2" strokeWidth=".7" />
              <circle cx="11.500" cy="7" r="6.500" fill="#e2361f" />
              <text x="12" y="10.500" textAnchor="middle" fontSize="10" fill="#fff">1</text>
            </svg>
          </button>
        </ToolRight>
      </ToolBar>
      <ToolBar>
        <ToolGroup>
          <Tools names={['pointer', 'hair']} active={['pointer']} />
          <Divider $space={1} />
          <Tools names={['vline', 'hline', 'trend', 'channel', 'fibo']} />
          <Letter>A</Letter>
          <Tools names={['label', 'arrows']} /><Caret aria-label="arrow list" />
          <Divider />
          {['M1', 'M5', 'M15', 'M30', 'H1', 'H4', 'D1', 'W1', 'MN'].map(t => <Period key={t} $on={t === 'M5'}>{t}</Period>)}
        </ToolGroup>
      </ToolBar>
    </>
  )
}

function MarketWatch() {
  return (
    <>
      <PanelHead>
        <h2>市场报价: <b>06:59:41</b></h2>
        <button aria-label="close market watch"><Cross size={5} /></button>
      </PanelHead>
      <ListBox>
        <Quotes>
          <thead><tr><th>交易品种</th><th>卖价</th><th>买价</th></tr></thead>
          <tbody>
            {quotes.map(([symbol, bid, ask, dir, flags]) => (
              <Quote
                key={symbol}
                $dir={dir}
                $dim={flags.includes('dim')}
                $mark={flags.includes('mark')}
                $selected={flags === 'selected'}
              >
                <td><Arrow dir={dir} />{symbol}</td>
                <td>{bid}</td>
                <td>{ask}</td>
              </Quote>
            ))}
          </tbody>
        </Quotes>
        <Gutter $width={13} $top={33}><Thumb $length={32} /></Gutter>
      </ListBox>
      <BottomTabs>
        <BottomTab $on>交易品种</BottomTab>
        <BottomTab>即时图</BottomTab>
        <Tick />
      </BottomTabs>
    </>
  )
}

function Navigator() {
  return (
    <>
      <NavGap />
      <PanelHead $active>
        <h2>导航</h2>
        <button aria-label="close navigator"><Cross size={5} /></button>
      </PanelHead>
      <TreeArea>
        <Tree>
          <Node $root><svg width="12" height="13" viewBox="2 1 13 14" fill="none" aria-hidden="true"><Windows /></svg>TradeMax Global MT4</Node>
          <Node><Expander />{treeIcons.accounts}账户</Node>
          <Node><Expander />{treeIcons.indicators}技术指标</Node>
          <Node><Expander />{treeIcons.experts}EA交易</Node>
          <Node><Expander />{treeIcons.scripts}脚本</Node>
        </Tree>
      </TreeArea>
      <BottomTabs $line>
        <BottomTab $on>常用</BottomTab>
        <BottomTab>收藏夹</BottomTab>
        <Tick />
      </BottomTabs>
      <NavGap />
    </>
  )
}

function Chart() {
  return (
    <ChartFrame>
      <PlotRow>
        <Plot>
          <svg viewBox="0 0 877 470" preserveAspectRatio="xMinYMin slice" shapeRendering="crispEdges" role="img" aria-label="XAUUSDecn,M5">
            <g stroke="#2c333b" strokeDasharray="2 1">
              {prices.map((p, i) => <path key={p} d={`M0 ${Math.round(7 + 26.4 * i)}.5H877`} />)}
              {gridColumns.map(x => <path key={x} d={`M${x}.5 0V470`} />)}
            </g>
            <path d="M0 347.500H877" stroke="#5a5a5a" />
            {candles.map(c => (
              <g key={c.x}>
                <path d={`M${c.x + 0.5} ${c.high}V${c.low}`} stroke="#006a00" />
                {c.falling ? (
                  <>
                    <rect x={c.x - 1} y={c.top} width="2" height={Math.max(1, c.bottom - c.top)} fill="#d4fbd4" />
                    <rect x={c.x + 1} y={c.top} width="1" height={Math.max(1, c.bottom - c.top)} fill="#1f7a28" />
                  </>
                ) : (
                  <rect x={c.x - 0.5} y={c.top + 0.5} width="2" height={Math.max(0.5, c.bottom - c.top)} fill="#001800" stroke="#005c00" />
                )}
              </g>
            ))}
          </svg>
        </Plot>
        <PriceAxis>
          {prices.map(p => <span key={p}>{p}</span>)}
          <PriceTag>3336.47</PriceTag>
        </PriceAxis>
      </PlotRow>
      <TimeAxis>{times.map(t => <span key={t}>{t}</span>)}</TimeAxis>
      <ChartTitle>
        <svg width="6" height="4" aria-hidden="true"><path d="M0 0h6L3 3.500z" fill="#fff" /></svg>
        {'XAUUSDecn,M5  3335.64 3336.47 3335.59 3336.47'}
      </ChartTitle>
      <ExpertLabel>
        TurboTrade AI EA
        <svg width="9" height="9" viewBox="0 0 9 9" fill="none" stroke="#ddd" strokeWidth=".8" aria-hidden="true">
          <circle cx="4.500" cy="4.500" r="4" />
          <path d="M3 3v1M6 3v1M2.500 5.500c1 1.500 3 1.500 4 0" />
        </svg>
      </ExpertLabel>
    </ChartFrame>
  )
}

function ExpertDialog() {
  return (
    <Dialog role="dialog" aria-label="Expert">
      <DialogTitle>
        <h1>Expert - TurboTrade AI EA</h1>
        <button>?</button>
        <button aria-label="close"><Cross size={9} color="#333" width={0.7} /></button>
      </DialogTitle>
      <DialogTabs>
        <DialogTab>关于</DialogTab>
        <DialogTab>常用</DialogTab>
        <DialogTab $on>输入参数</DialogTab>
        <DialogTab>依存关系</DialogTab>
      </DialogTabs>
      <DialogPage>
        <ParamBox>
          <Params>
            <thead><tr><th>变量</th><th>赋值</th></tr></thead>
            <tbody>
              {params.map(([kind, name, value], i) => (
                <tr key={i}>
                  <td><ParamIcon kind={kind} />{name}</td>
                  <td>{value}</td>
                </tr>
              ))}
            </tbody>
          </Params>
          <Gutter $width={13} $top={14}><Thumb $length={64} /></Gutter>
        </ParamBox>
        <PageActions>
          <PushButton>加载(<u>L</u>)</PushButton>
          <PushButton>保存(<u>S</u>)</PushButton>
        </PageActions>
      </DialogPage>
      <DialogFoot>
        <PushButton $primary>确定</PushButton>
        <PushButton>取消</PushButton>
        <PushButton>重设</PushButton>
      </DialogFoot>
    </Dialog>
  )
}

export default function App() {
  return (
    <Desktop>
      <Global />
      <TopBars />
      <Workspace>
        <Side>
          <MarketWatch />
          <Navigator />
        </Side>
        <ChartPane>
          <Chart />
          <ChartTabs>
            <button>XAUUSD,H1</button>
            <button>XAUUSD,H1</button>
            <button>XAUUSDecn,M5</button>
            <div>
              <button aria-label="previous tab"><svg width="4" height="6"><path d="M4 0v6L0 3z" fill="#999" /></svg></button>
              <button aria-label="next tab"><svg width="4" height="6"><path d="M0 0v6l4-3z" fill="#999" /></svg></button>
            </div>
          </ChartTabs>
        </ChartPane>
      </Workspace>
      <Terminal>
        <Rail>
          <button aria-label="close terminal"><Cross size={4} /></button>
          <i />
        </Rail>
        <TradesArea>
          <Trades>
            <colgroup>{columns.map(([, width], i) => <col key={i} width={width} />)}</colgroup>
            <thead><tr>{columns.map(([name], i) => <th key={i}>{name}</th>)}</tr></thead>
            <tbody>
              <tr>
                <td colSpan={11}>
                  <svg width="8" height="8" aria-hidden="true"><circle cx="4" cy="4" r="3" fill="#ccc" stroke="#999" /><path d="M2 6l4-4" stroke="#999" /></svg>
                  余额: 622.65 USD&nbsp; 净值: 622.65&nbsp; 可用预付款: 622.65
                </td>
                <td>0.00</td>
              </tr>
            </tbody>
          </Trades>
        </TradesArea>
      </Terminal>
      <ExpertDialog />
      <Badge>
        <Ghost $x={0} $y={5}>CN</Ghost>
        <Ghost $x={11} $y={82}>C.CN</Ghost>
        <Ghost $x={130} $y={80}>OGO神</Ghost>
        <svg width="42" height="44" viewBox="0 0 42 44" aria-hidden="true">
          <path d="M12 1h22q2 0 2.500 2L41 24q.5 3-2.500 3H18q-2.500 0-3-2.500L10 3.500Q10 1 12 1z" fill="#0a4ae8" />
          <g fill="none" stroke="#0a42ec" strokeWidth="3">
            <path d="M7 6l5.500 21.500q.8 3.500 4 3.500H40" />
            <path d="M4 12l5 20q.8 4.500 4.500 4.500H38" />
            <path d="M1 18l4.500 18q1 5.500 5 5.500H36" />
          </g>
        </svg>
        <div>
          <strong>精品EA</strong>
          <a href="https://eaclubshare.com">eaclubshare.com</a>
        </div>
      </Badge>
    </Desktop>
  )
}
